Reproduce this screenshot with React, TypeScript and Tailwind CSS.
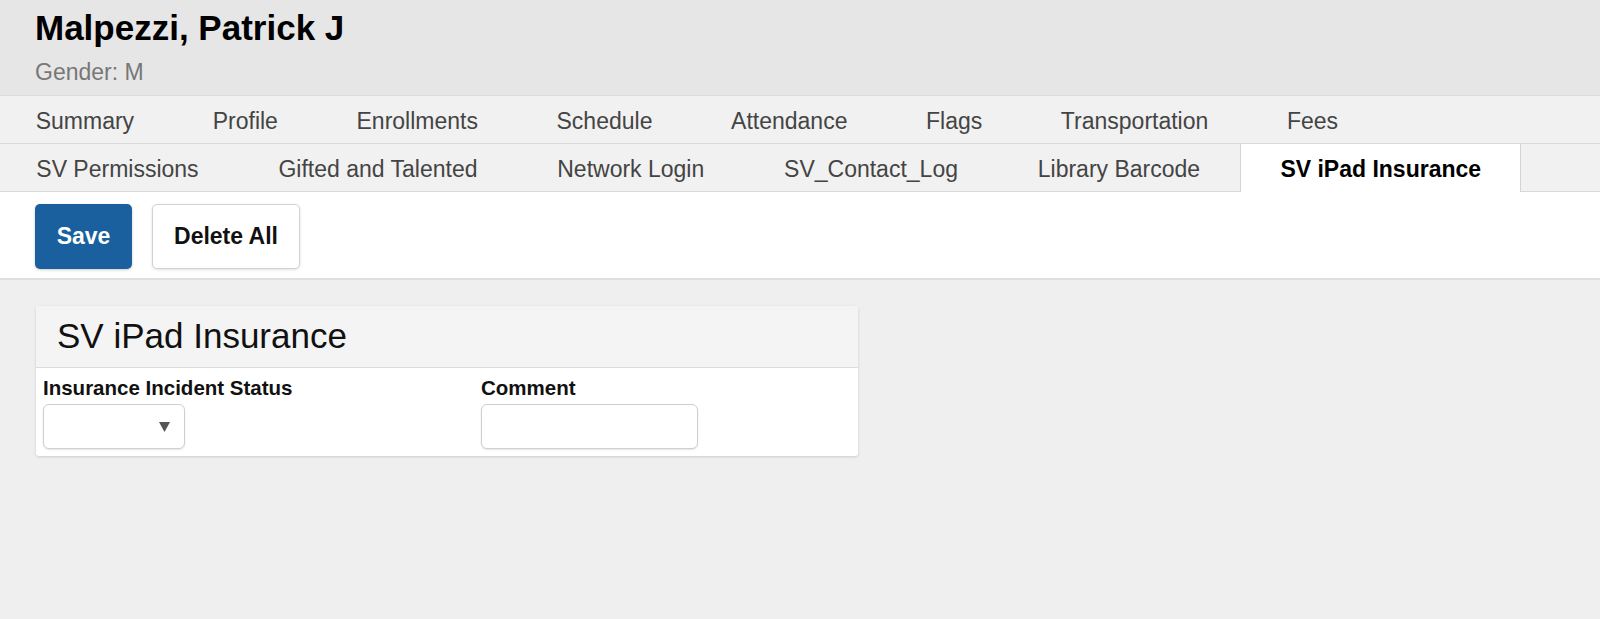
const rowOne = ['Summary', 'Profile', 'Enrollments', 'Schedule', 'Attendance', 'Flags', 'Transportation', 'Fees'];
const rowTwo = ['SV Permissions', 'Gifted and Talented', 'Network Login', 'SV_Contact_Log', 'Library Barcode', 'SV iPad Insurance'];
const active = 'SV iPad Insurance';

const TabRow = ({ tabs, pad }: { tabs: string[]; pad: string }) => (
  <div className="flex h-[48px] items-stretch border-b border-[#d9d9d9] bg-[#f1f1f1]">
    <div className="-ml-[3.6px] flex items-stretch">
      {tabs.map((t) =>
        t === active ? (
          <div
            key={t}
            className="-mb-px flex items-center border-x border-[#d4d4d4] bg-white px-[39.4px] pt-[3px] text-[23px] font-bold leading-none text-black"
          >
            {t}
          </div>
        ) : (
          <div key={t} className={`flex items-center ${pad} pt-[3px] text-[23px] leading-none text-[#444]`}>
            {t}
          </div>
        )
      )}
    </div>
  </div>
);

export default function App() {
  return (
    <div className="min-h-[619px] bg-[#efefef] font-['Liberation_Sans',Arial,sans-serif]">
      <div className="h-[96px] border-b border-[#dcdcdc] bg-[#e6e6e6] px-[35px] pt-[10px]">
        <h1 className="text-[35px] font-bold leading-none text-black">Malpezzi, Patrick J</h1>
        <p className="mt-[16px] text-[23px] leading-none text-[#777]">Gender: M</p>
      </div>
      <TabRow tabs={rowOne} pad="px-[39.3px]" />
      <TabRow tabs={rowTwo} pad="px-[39.9px]" />
      <div className="flex h-[88px] items-start gap-[20px] border-b-2 border-[#e0e0e0] bg-white px-[35px] pt-[12px]">
        <button className="h-[65px] w-[97px] rounded-[5px] bg-[#1a609e] text-[23px] font-bold text-white shadow-[0_1px_3px_rgba(0,0,0,0.2)]">
          Save
        </button>
        <button className="h-[65px] w-[148px] rounded-[5px] border border-[#d2d2d2] bg-white text-[23px] font-bold text-[#111] shadow-[0_1px_3px_rgba(0,0,0,0.12)]">
          Delete All
        </button>
      </div>
      <div className="px-[36px] pt-[26px]">
        <div className="w-[822px] overflow-hidden rounded-[3px] bg-white shadow-[0_1px_3px_rgba(0,0,0,0.15)]">
          <div className="flex h-[62px] items-center border-b border-[#dcdcdc] bg-[#f4f4f4] px-[21px] pb-[2px]">
            <h2 className="text-[35px] leading-none text-[#111]">SV iPad Insurance</h2>
          </div>
          <div className="flex px-[7px] pb-[7px] pt-[10px]">
            <div className="w-[438px]">
              <label className="block text-[20.5px] font-bold leading-none text-[#111]">Insurance Incident Status</label>
              <div className="mt-[5.5px] flex h-[45px] w-[142px] items-center justify-end rounded-[6px] border border-[#cfcfcf] bg-white pr-[14px] shadow-[0_1px_2px_rgba(0,0,0,0.1)]">
                <svg width="11" height="10" viewBox="0 0 11 10">
                  <path d="M0 0 H11 L5.5 10 Z" fill="#555" />
                </svg>
              </div>
            </div>
            <div>
              <label className="block text-[20.5px] font-bold leading-none text-[#111]">Comment</label>
              <div className="mt-[5.5px] h-[45px] w-[217px] rounded-[6px] border border-[#cfcfcf] bg-white shadow-[0_1px_2px_rgba(0,0,0,0.1)]" />
            </div>
          </div>
        </div>
      </div>
    </div>
  );
}
